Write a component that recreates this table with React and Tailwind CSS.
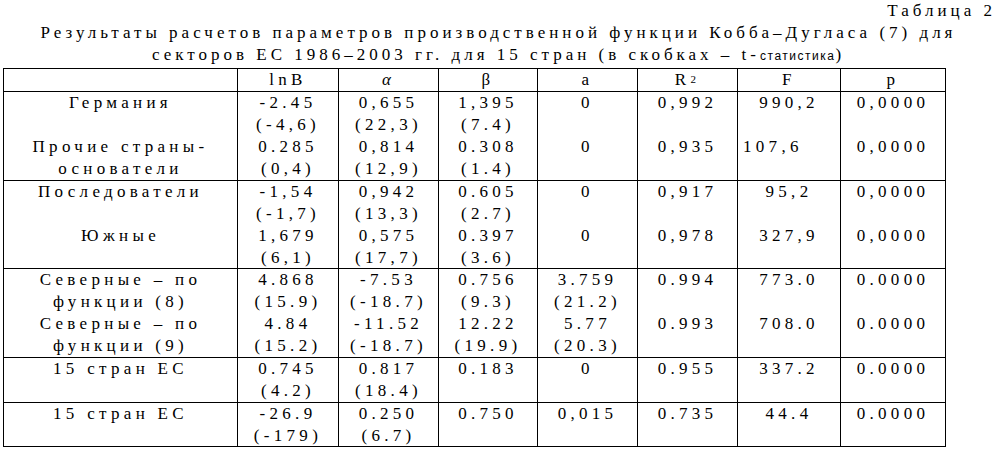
const groups = [
  [
    ["Германия", "", "Прочие страны-", "основатели"],
    ["-2.45", "(-4,6)", "0.285", "(0,4)"],
    ["0,655", "(22,3)", "0,814", "(12,9)"],
    ["1,395", "(7.4)", "0.308", "(1.4)"],
    ["0", "", "0", ""],
    ["0,992", "", "0,935", ""],
    ["990,2", "", "<107,6", ""],
    ["0,0000", "", "0,0000", ""],
  ],
  [
    ["Последователи", "", "Южные", ""],
    ["-1,54", "(-1,7)", "1,679", "(6,1)"],
    ["0,942", "(13,3)", "0,575", "(17,7)"],
    ["0.605", "(2.7)", "0.397", "(3.6)"],
    ["0", "", "0", ""],
    ["0,917", "", "0,978", ""],
    ["95,2", "", "327,9", ""],
    ["0,0000", "", "0,0000", ""],
  ],
  [
    ["Северные – по", "функции (8)", "Северные – по", "функции (9)"],
    ["4.868", "(15.9)", "4.84", "(15.2)"],
    ["-7.53", "(-18.7)", "-11.52", "(-18.7)"],
    ["0.756", "(9.3)", "12.22", "(19.9)"],
    ["3.759", "(21.2)", "5.77", "(20.3)"],
    ["0.994", "", "0.993", ""],
    ["773.0", "", "708.0", ""],
    ["0.0000", "", "0.0000", ""],
  ],
  [
    ["15 стран ЕС", ""],
    ["0.745", "(4.2)"],
    ["0.817", "(18.4)"],
    ["0.183", ""],
    ["0", ""],
    ["0.955", ""],
    ["337.2", ""],
    ["0.0000", ""],
  ],
  [
    ["15 стран ЕС", ""],
    ["-26.9", "(-179)"],
    ["0.250", "(6.7)"],
    ["0.750", ""],
    ["0,015", ""],
    ["0.735", ""],
    ["44.4", ""],
    ["0.0000", ""],
  ],
];

const widths = ["w-[234px]", "w-[101px]", "w-[100px]", "w-[99px]", "w-[100px]", "w-[100px]", "w-[103px]", "w-[105px]"];

// rows 2 and 5 are a pixel shorter in the scan
const shortRows = [1, 4];

const Cell = ({ lines, short }) => (
  <td className="border border-black p-0 align-top">
    {lines.map((line, i) => {
      const h = short && i === lines.length - 1 ? "h-[21px]" : "h-[22px]";
      return line.startsWith("<") ? (
        <div key={i} className={`${h} pl-[5px] text-left`}>
          {line.slice(1)}
        </div>
      ) : (
        <div key={i} className={`${h} text-center`}>
          {line}
        </div>
      );
    })}
  </td>
);

export default function App() {
  return (
    <div className="min-h-[467px] w-[997px] bg-white font-['Liberation_Serif','Times_New_Roman',serif] text-[17px] leading-[22px] tracking-[4px] text-black">
      <div className="pr-[1px] text-right">Таблица 2</div>
      <div className="text-center">
        Результаты расчетов параметров производственной функции Кобба–Дугласа (7) для
      </div>
      <div className="text-center">
        секторов ЕС 1986–2003 гг. для 15 стран (в скобках – t-
        <span className="font-['Liberation_Sans',Arial,sans-serif] text-[12px] tracking-[1.5px]">
          статистика
        </span>
        )
      </div>
      <table className="ml-[3px] mt-px table-fixed border-collapse tracking-[4.3px]">
        <colgroup>
          {widths.map((w, i) => (
            <col key={i} className={w} />
          ))}
        </colgroup>
        <thead>
          <tr>
            <th className="h-[22px] border border-black p-0 font-normal"></th>
            <th className="border border-black p-0 font-normal">lnB</th>
            <th className="border border-black p-0 font-normal italic">α</th>
            <th className="border border-black p-0 font-normal">β</th>
            <th className="border border-black p-0 font-normal">a</th>
            <th className="border border-black p-0 font-normal">
              R<sup className="relative -top-[2px] text-[11px]">2</sup>
            </th>
            <th className="border border-black p-0 font-normal">F</th>
            <th className="border border-black p-0 font-normal">p</th>
          </tr>
        </thead>
        <tbody>
          {groups.map((group, g) => (
            <tr key={g}>
              {group.map((lines, c) => (
                <Cell key={c} lines={lines} short={shortRows.includes(g)} />
              ))}
            </tr>
          ))}
        </tbody>
      </table>
    </div>
  );
}
